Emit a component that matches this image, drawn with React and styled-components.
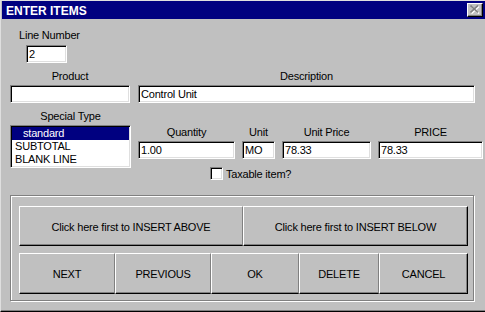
import React from "react";
import styled, { createGlobalStyle } from "styled-components";

const GlobalStyle = createGlobalStyle`
  html, body { margin: 0; padding: 0; background: #c0c0c0; }
  body {
    font-family: "Liberation Sans", Arial, sans-serif;
    font-size: 11px;
    letter-spacing: -0.2px;
    color: #000;
  }
  * { box-sizing: border-box; }
`;

const Window = styled.div`
  width: 485px;
  height: 312px;
  display: flex;
  flex-direction: column;
  background: #c0c0c0;
  border-top: 1px solid #dfdfdf;
  border-left: 1px solid #dfdfdf;
  border-bottom: 1px solid #000;
  box-shadow: inset 0 -1px #808080;
  overflow: hidden;
`;

const TitleBar = styled.div`
  height: 18px;
  margin-left: 1px;
  background: #000080;
  display: flex;
  align-items: center;
  justify-content: space-between;
  padding: 0 2px 0 4px;
  flex-shrink: 0;
`;

const TitleText = styled.div`
  color: #fff;
  font-weight: bold;
  font-size: 12px;
  letter-spacing: 0;
  line-height: 16px;
  padding-top: 2px;
`;

const CloseButton = styled.div`
  width: 16px;
  height: 14px;
  background: #c0c0c0;
  border-top: 1px solid #fff;
  border-left: 1px solid #fff;
  border-right: 1px solid #000;
  border-bottom: 1px solid #000;
  box-shadow: inset -1px -1px #808080;
  display: flex;
  align-items: center;
  justify-content: center;
  padding-bottom: 1px;
`;

const Body = styled.div`
  display: flex;
  flex-direction: column;
  padding-left: 9px;
`;

const LineNumberBlock = styled.div`
  display: flex;
  flex-direction: column;
  align-items: flex-start;
  margin-top: 10px;
`;

const Label = styled.div`
  line-height: 13px;
  height: 13px;
  white-space: nowrap;
  margin-left: ${(p) => p.$ml || 0}px;
`;

const Field = styled.div`
  width: ${(p) => p.$w}px;
  height: 18px;
  margin-top: ${(p) => p.$mt ?? 2}px;
  margin-left: ${(p) => p.$ml || 0}px;
  background: #fff;
  border: 1px solid;
  border-color: #808080 #fff #fff #808080;
  box-shadow: inset 1px 1px #000, inset -1px -1px #dfdfdf;
  padding: 1px 2px 0 2px;
  line-height: 14px;
  white-space: nowrap;
  overflow: hidden;
`;

const Row = styled.div`
  display: flex;
  align-items: flex-start;
  gap: ${(p) => p.$gap}px;
  margin-top: ${(p) => p.$mt || 0}px;
`;

const Column = styled.div`
  display: flex;
  flex-direction: column;
  align-items: center;
  width: ${(p) => p.$w}px;
`;

const RightColumn = styled.div`
  display: flex;
  flex-direction: column;
  padding-top: 16px;
`;

const ListBox = styled.div`
  width: 121px;
  height: 43px;
  margin-top: 2px;
  background: #fff;
  border: 1px solid;
  border-color: #808080 #fff #fff #808080;
  box-shadow: inset 1px 1px #000, inset -1px -1px #dfdfdf;
  padding: 1px;
  display: flex;
  flex-direction: column;
`;

const ListItem = styled.div`
  height: 13px;
  line-height: 13px;
  padding-left: ${(p) => (p.$indent ? 11 : 3)}px;
  background: ${(p) => (p.$selected ? "#000080" : "transparent")};
  color: ${(p) => (p.$selected ? "#fff" : "#000")};
  white-space: nowrap;
`;

const CheckRow = styled.div`
  display: flex;
  align-items: center;
  gap: 3px;
  margin-top: 8px;
  margin-left: 72px;
  height: 13px;
`;

const CheckBox = styled.div`
  width: 13px;
  height: 13px;
  background: #fff;
  border: 1px solid;
  border-color: #808080 #fff #fff #808080;
  box-shadow: inset 1px 1px #000, inset -1px -1px #dfdfdf;
`;

const CheckLabel = styled.div`
  line-height: 13px;
  padding-top: 1px;
`;

const GroupBox = styled.div`
  margin-top: 15px;
  width: 464px;
  height: 106px;
  border: 1px solid #808080;
  box-shadow: inset 1px 1px #fff, 1px 1px #fff;
  padding: 10px 6px 0 8px;
  display: flex;
  flex-direction: column;
  gap: 7px;
`;

const ButtonGrid = styled.div`
  display: grid;
  grid-template-columns: ${(p) => p.$cols};
  height: ${(p) => p.$h}px;
`;

const PushButton = styled.div`
  background: #c0c0c0;
  border-top: 1px solid #fff;
  border-left: 1px solid #fff;
  border-bottom: 1px solid #000;
  border-right: 1px solid ${(p) => (p.$last ? "#000" : "#808080")};
  box-shadow: ${(p) =>
    p.$last ? "inset -1px -1px #808080" : "inset 0 -1px #808080"};
  display: flex;
  align-items: center;
  justify-content: center;
  white-space: nowrap;
  padding-top: 1px;
`;

const CloseGlyph = () => (
  <svg width="10" height="9" viewBox="0 0 10 9">
    <g stroke="#fff" strokeWidth="1.6">
      <path d="M1.5 1.5 L9 8.5" />
      <path d="M9 1.5 L1.5 8.5" />
    </g>
    <g stroke="#808080" strokeWidth="1.6">
      <path d="M0.5 0.5 L8 7.5" />
      <path d="M8 0.5 L0.5 7.5" />
    </g>
  </svg>
);

export default function App() {
  return (
    <>
      <GlobalStyle />
      <Window>
        <TitleBar>
          <TitleText>ENTER ITEMS</TitleText>
          <CloseButton>
            <CloseGlyph />
          </CloseButton>
        </TitleBar>
        <Body>
          <LineNumberBlock>
            <Label $ml={9}>Line Number</Label>
            <Field $w={41} $mt={3} $ml={16}>2</Field>
          </LineNumberBlock>

          <Row $gap={8} $mt={7}>
            <Column $w={120}>
              <Label>Product</Label>
              <Field $w={120}></Field>
            </Column>
            <Column $w={337}>
              <Label>Description</Label>
              <Field $w={337}>Control Unit</Field>
            </Column>
          </Row>

          <Row $gap={7} $mt={7}>
            <Column $w={121}>
              <Label>Special Type</Label>
              <ListBox>
                <ListItem $selected $indent>standard</ListItem>
                <ListItem>SUBTOTAL</ListItem>
                <ListItem>BLANK LINE</ListItem>
              </ListBox>
            </Column>
            <RightColumn>
              <Row $gap={7}>
                <Column $w={97}>
                  <Label>Quantity</Label>
                  <Field $w={97}>1.00</Field>
                </Column>
                <Column $w={33}>
                  <Label>Unit</Label>
                  <Field $w={33}>MO</Field>
                </Column>
                <Column $w={89}>
                  <Label>Unit Price</Label>
                  <Field $w={89}>78.33</Field>
                </Column>
                <Column $w={105}>
                  <Label>PRICE</Label>
                  <Field $w={105}>78.33</Field>
                </Column>
              </Row>
              <CheckRow>
                <CheckBox />
                <CheckLabel>Taxable item?</CheckLabel>
              </CheckRow>
            </RightColumn>
          </Row>

          <GroupBox>
            <ButtonGrid $cols="224px 225px" $h={40}>
              <PushButton>Click here first to INSERT ABOVE</PushButton>
              <PushButton $last>Click here first to INSERT BELOW</PushButton>
            </ButtonGrid>
            <ButtonGrid $cols="96px 96px 88px 80px 89px" $h={41}>
              <PushButton>NEXT</PushButton>
              <PushButton>PREVIOUS</PushButton>
              <PushButton>OK</PushButton>
              <PushButton>DELETE</PushButton>
              <PushButton $last>CANCEL</PushButton>
            </ButtonGrid>
          </GroupBox>
        </Body>
      </Window>
    </>
  );
}
